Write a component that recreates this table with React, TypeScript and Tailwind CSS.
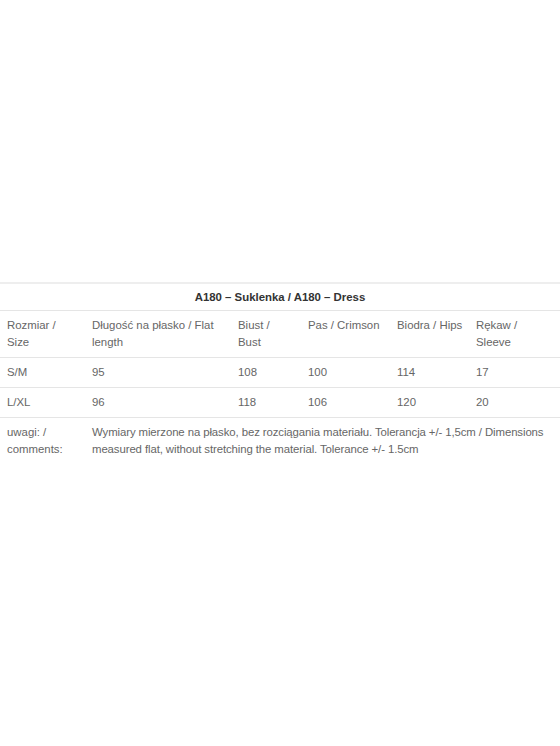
const rows = [
  ['S/M', '95', '108', '100', '114', '17'],
  ['L/XL', '96', '118', '106', '120', '20'],
]

const cell = 'px-[7px] py-[6px] align-top'

export default function App() {
  return (
    <div className="h-[746px] w-[560px] bg-white pt-[282px] font-['Liberation_Sans',Arial,sans-serif] text-[11.4px] leading-[17px] text-[#666]">
      <table className="w-full border-collapse table-fixed">
        <colgroup>
          <col className="w-[85px]" />
          <col className="w-[146px]" />
          <col className="w-[70px]" />
          <col className="w-[89px]" />
          <col className="w-[79px]" />
          <col />
        </colgroup>
        <tbody>
          <tr className="border-t-2 border-[#eee]">
            <td colSpan={6} className="py-[5px] leading-[16px] text-center font-bold text-[#333]">
              A180 – Suklenka / A180 – Dress
            </td>
          </tr>
          <tr className="border-t border-[#e5e5e5]">
            <td className={cell}>Rozmiar / Size</td>
            <td className={cell}>Długość na płasko / Flat length</td>
            <td className={cell}>Biust / Bust</td>
            <td className={cell}>Pas / Crimson</td>
            <td className={`${cell} whitespace-nowrap`}>Biodra / Hips</td>
            <td className={cell}>Rękaw / Sleeve</td>
          </tr>
          {rows.map((r) => (
            <tr key={r[0]} className="border-t border-[#e5e5e5]">
              {r.map((c, i) => (
                <td key={i} className={cell}>
                  {c}
                </td>
              ))}
            </tr>
          ))}
          <tr className="border-t border-[#e5e5e5]">
            <td className={cell}>uwagi: / comments:</td>
            <td colSpan={5} className="pl-[7px] pr-0 py-[6px] align-top tracking-[-0.1px]">
              Wymiary mierzone na płasko, bez rozciągania materiału. Tolerancja +/- 1,5cm / Dimensions measured flat, without stretching the material. Tolerance +/- 1.5cm
            </td>
          </tr>
        </tbody>
      </table>
    </div>
  )
}
